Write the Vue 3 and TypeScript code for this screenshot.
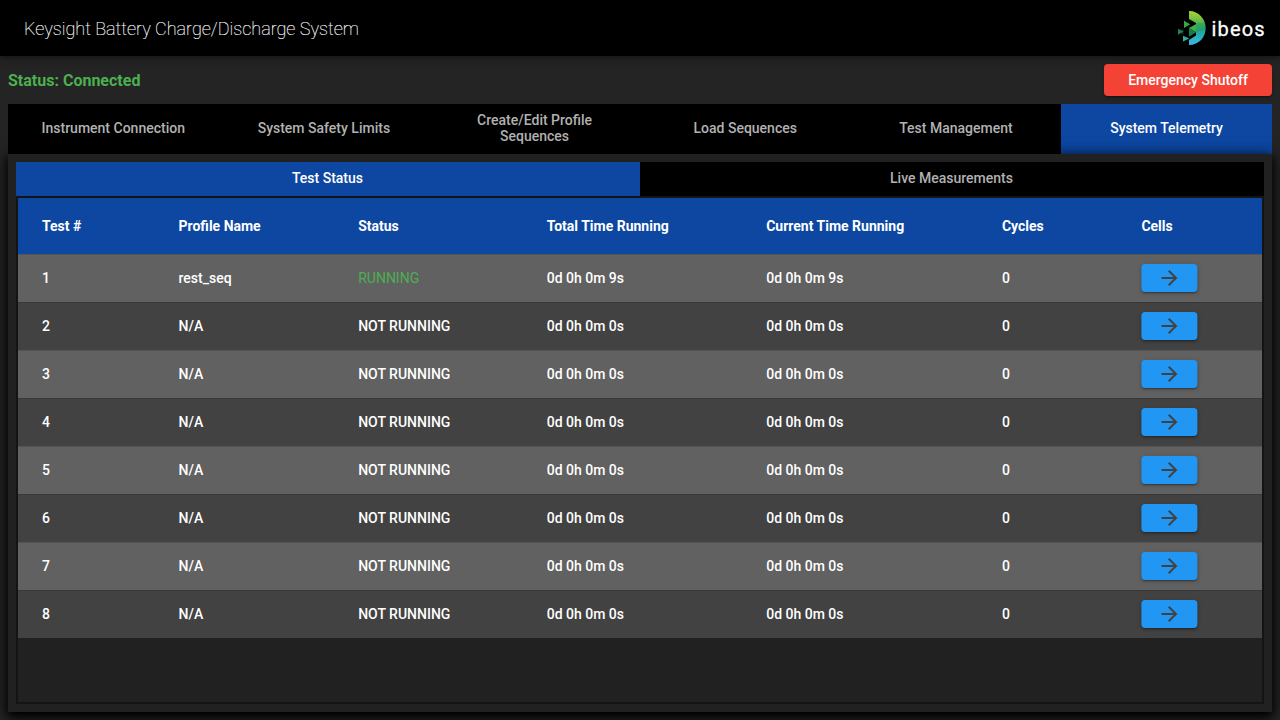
<script setup lang="ts">
interface TestRow {
  id: number
  profile: string
  status: string
  total: string
  current: string
  cycles: number
}

const tabs: string[] = [
  'Instrument Connection',
  'System Safety Limits',
  'Create/Edit Profile Sequences',
  'Load Sequences',
  'Test Management',
  'System Telemetry',
]
const activeTab = 5

const columns: string[] = [
  'Test #',
  'Profile Name',
  'Status',
  'Total Time Running',
  'Current Time Running',
  'Cycles',
  'Cells',
]

const rows: TestRow[] = Array.from({ length: 8 }, (_, i) => ({
  id: i + 1,
  profile: i === 0 ? 'rest_seq' : 'N/A',
  status: i === 0 ? 'RUNNING' : 'NOT RUNNING',
  total: i === 0 ? '0d 0h 0m 9s' : '0d 0h 0m 0s',
  current: i === 0 ? '0d 0h 0m 9s' : '0d 0h 0m 0s',
  cycles: 0,
}))
</script>

<template>
  <div class="app">
    <header class="toolbar">
      <h1 class="title">Keysight Battery Charge/Discharge System</h1>
      <svg class="logo" width="90" height="36" viewBox="0 0 90 36">
        <defs>
          <linearGradient id="arc" x1="0" y1="0" x2="0" y2="1">
            <stop offset="0" stop-color="#b4d432" />
            <stop offset="0.3" stop-color="#62bb46" />
            <stop offset="0.55" stop-color="#1fa17c" />
            <stop offset="0.75" stop-color="#2db3b5" />
            <stop offset="1" stop-color="#3db4ea" />
          </linearGradient>
        </defs>
        <path d="M13 1C23 1 29.600 9 29.600 18S23 35 13 35V30L20 25.500V13L13 9Z" fill="url(#arc)" />
        <path d="M20 13L29 12.500C29.500 15 29.700 18 29.500 20L20 22Z" fill="#229a5b" fill-opacity="0.45" />
        <path d="M13 1L18 7L13 9Z" fill="#85c441" fill-opacity="0.6" />
        <path d="M20 22L29.500 20C29 24 27.500 27.500 25 30.500L20 25.500Z" fill="#23a5b8" fill-opacity="0.5" />
        <path d="M13 18L20 22.300L13 26.800Z" fill="#128052" />
        <path d="M13 18L20.200 14V22.300Z" fill="#43ae49" />
        <path d="M8 10.800L14.200 14.300L8 18Z" fill="#37a849" />
        <path d="M7.500 18.700V24.800L2 21.500Z" fill="#1c8554" fill-opacity="0.35" />
        <path d="M2 18.700L7.500 21.500L2 24.800Z" fill="#1c8554" />
        <path d="M7 25.700L13.300 28.500L7 31.500Z" fill="#2bb0a8" />
        <text class="brand" x="35.500" y="26.200" textLength="53">ibeos</text>
      </svg>
    </header>

    <div class="status-bar">
      <span class="connection">Status: Connected</span>
      <button class="shutoff">Emergency Shutoff</button>
    </div>

    <nav class="tabs">
      <div v-for="(tab, i) in tabs" :key="tab" class="tab" :class="{ active: i === activeTab }">
        <span>{{ tab }}</span>
      </div>
    </nav>

    <main class="panel">
      <div class="subtabs">
        <div class="subtab active">Test Status</div>
        <div class="subtab">Live Measurements</div>
      </div>
      <section class="table">
        <div class="row head">
          <div v-for="c in columns" :key="c">{{ c }}</div>
        </div>
        <div v-for="r in rows" :key="r.id" class="row">
          <div>{{ r.id }}</div>
          <div>{{ r.profile }}</div>
          <div :class="{ running: r.status === 'RUNNING' }">{{ r.status }}</div>
          <div>{{ r.total }}</div>
          <div>{{ r.current }}</div>
          <div>{{ r.cycles }}</div>
          <div>
            <button class="go" aria-label="Cells">
              <svg width="24" height="24" viewBox="0 0 24 24">
                <path d="M12 4l-1.410 1.410L16.170 11H4v2h12.170l-5.580 5.590L12 20l8-8z" />
              </svg>
            </button>
          </div>
        </div>
      </section>
    </main>
  </div>
</template>

<style>
body {
  background: #242424;
  overflow: hidden;
}
</style>

<style scoped>
.app {
  box-sizing: border-box;
  width: 1280px;
  height: 720px;
  display: flex;
  flex-direction: column;
  overflow: hidden;
  font-family: Roboto, sans-serif;
  font-size: 14px;
  color: #fff;
  background: #242424;
}
.toolbar {
  flex: none;
  height: 56px;
  box-sizing: border-box;
  padding: 0 14px 0 24px;
  display: flex;
  align-items: center;
  justify-content: space-between;
  background: #000;
  box-shadow: 0 2px 4px -1px rgba(0, 0, 0, 0.2), 0 4px 5px rgba(0, 0, 0, 0.14), 0 1px 10px rgba(0, 0, 0, 0.12);
}
.title {
  margin: 0;
  font-size: 18px;
  line-height: 24px;
  font-weight: 100;
  padding-top: 2px;
  -webkit-text-stroke: 0.15px #fff;
}
.brand {
  font-family: Roboto, sans-serif;
  font-size: 20px;
  font-weight: 400;
  fill: #fff;
  stroke: #fff;
  stroke-width: 0.3px;
}
.status-bar {
  flex: none;
  height: 48px;
  padding: 0 8px;
  display: flex;
  align-items: center;
  justify-content: space-between;
}
.connection {
  font-size: 16px;
  font-weight: 700;
  color: #4caf50;
}
.shutoff {
  width: 168px;
  height: 32px;
  padding: 0;
  border: 0;
  border-radius: 4px;
  font: 500 14px Roboto, sans-serif;
  color: #fff;
  background: #f44336;
  box-shadow: 0 3px 1px -2px rgba(0, 0, 0, 0.2), 0 2px 2px rgba(0, 0, 0, 0.14), 0 1px 5px rgba(0, 0, 0, 0.12);
}
.tabs {
  flex: none;
  height: 50px;
  margin: 0 8px;
  display: grid;
  grid-template-columns: repeat(6, 1fr);
  background: #000;
}
.tab {
  display: flex;
  align-items: center;
  justify-content: center;
  padding: 0 24.200px 2px 24px;
  text-align: center;
  line-height: 16px;
  font-weight: 500;
  color: #b2b2b2;
}
.active.tab,
.active.subtab {
  color: #fff;
  background: #0d47a1;
}
.panel {
  flex: none;
  height: 558px;
  box-sizing: border-box;
  margin: 0 8px;
  padding: 8px;
  display: flex;
  flex-direction: column;
  background: #212121;
  box-shadow: 0 5px 5px -3px rgba(0, 0, 0, 0.9), 0 4px 10px 1px rgba(0, 0, 0, 0.7), 0 3px 14px 2px rgba(0, 0, 0, 0.5);
}
.subtabs {
  flex: none;
  height: 34px;
  display: grid;
  grid-template-columns: 1fr 1fr;
  background: #000;
}
.subtab {
  padding-right: 1px;
  text-align: center;
  line-height: 32px;
  font-weight: 500;
  color: #b2b2b2;
}
.table {
  flex: 1;
  box-sizing: border-box;
  border: 2px solid #141414;
}
.row {
  height: 48px;
  box-sizing: border-box;
  padding-left: 24px;
  display: grid;
  grid-template-columns: 136.500px 179.700px 188.500px 219.500px 235.700px 139.500px 1fr;
  align-items: center;
  font-weight: 500;
  background: #424242;
  box-shadow: inset 0 1px #383838;
}
.row:nth-child(even) {
  background: #616161;
  box-shadow: inset 0 1px #555;
}
.row.head {
  height: 56px;
  font-weight: 700;
  box-shadow: none;
  background: #0d47a1;
}
.row .running {
  font-weight: 400;
  color: #4caf50;
}
.go {
  width: 56px;
  height: 28px;
  padding: 0;
  border: 0;
  border-radius: 4px;
  display: flex;
  align-items: center;
  justify-content: center;
  background: #2196f3;
  box-shadow: 0 3px 1px -2px rgba(0, 0, 0, 0.2), 0 2px 2px rgba(0, 0, 0, 0.14), 0 1px 5px rgba(0, 0, 0, 0.12);
  transform: translateX(0.400px);
}
.go path {
  fill: #424242;
}
</style>
